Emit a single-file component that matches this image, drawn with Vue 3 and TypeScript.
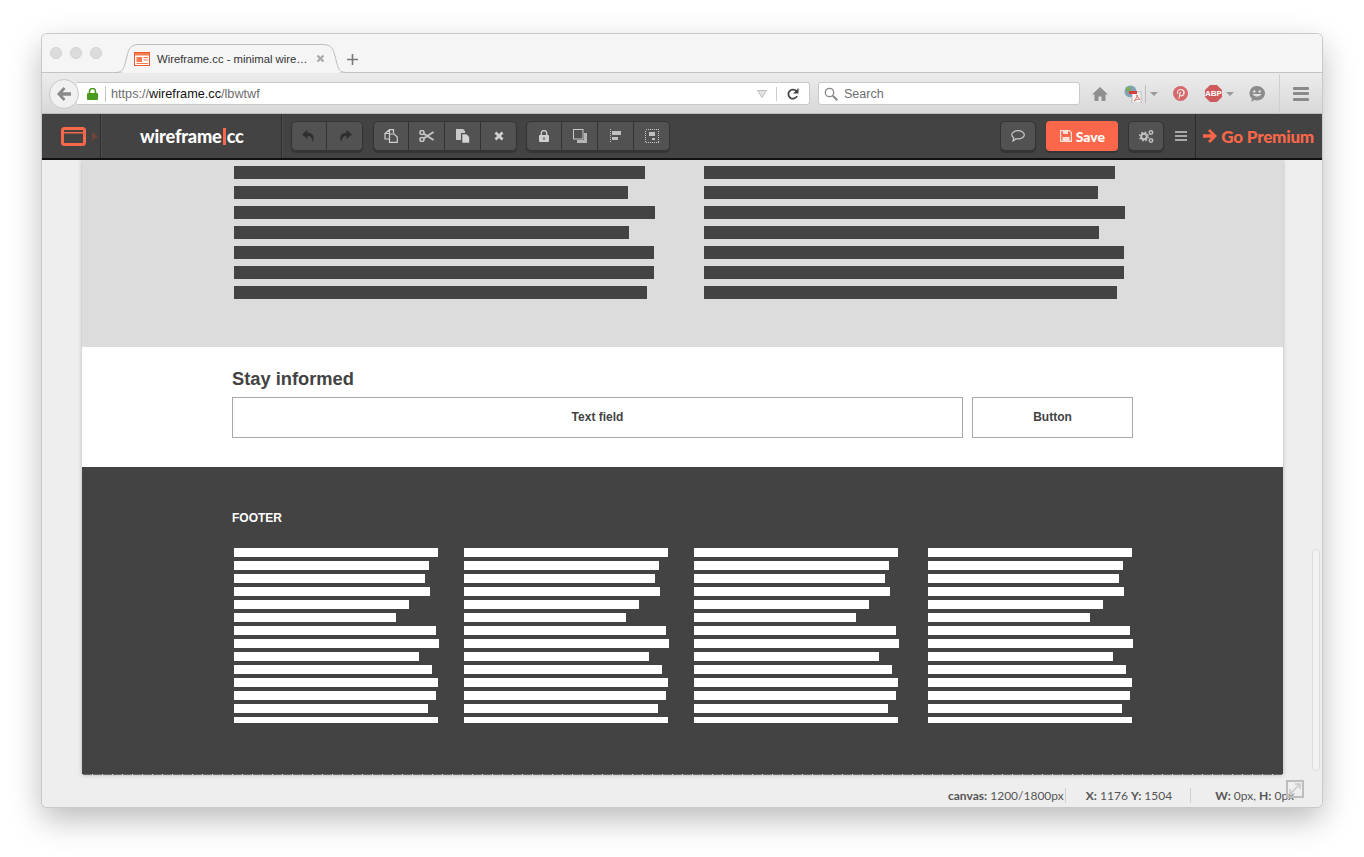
<template>
  <div class="page">
    <div class="window">
      <div class="tabstrip">
        <div class="lights"><i></i><i></i><i></i></div>
        <div class="tab">
          <svg class="tab-shape" width="232" height="29" viewBox="0 0 232 29">
            <path d="M0 28.5c6 0 8-2 9.500-7l3.500-13C14.500 3 18 .5 24 .5h184c6 0 9.500 2.500 11 8l3.500 13c1.500 5 3.500 7 9.500 7" fill="#f5f5f5" stroke="#bdbdbd" />
            <rect x="8" y="26" width="216" height="3" fill="#f5f5f5" />
          </svg>
          <svg class="favicon" width="16" height="14" viewBox="0 0 16 14">
            <rect x=".5" y=".5" width="15" height="13" fill="#fff" stroke="#f05a28" />
            <path d="M1 1h14v2.500H1zM2.500 5H8v5H2.500zM9.500 5H14v1H9.500zM9.500 7.500H14v1H9.500zM2.500 11H14v1H2.500z" fill="#f47b50" />
          </svg>
          <span class="tab-title">Wireframe.cc - minimal wire…</span>
          <svg class="tab-close" width="9" height="9" viewBox="0 0 9 9"><path d="M1.500 1.500l6 6M7.500 1.500l-6 6" stroke="#a8a8a8" stroke-width="2.200" /></svg>
        </div>
        <svg class="new-tab" width="11" height="11" viewBox="0 0 11 11"><path d="M5.500 0v11M0 5.500h11" stroke="#777" stroke-width="1.600" /></svg>
      </div>

      <div class="navbar">
        <div class="back">
          <svg width="16" height="14" viewBox="0 0 16 14"><path d="M7.500 0L1 7l6.500 7 2-2L6.500 8.800H15V5.200H6.500l3-3.200z" fill="#8a8a8a" /></svg>
        </div>
        <div class="urlbar">
          <svg class="lock" width="11" height="12" viewBox="0 0 11 12"><path d="M2.500 5V3.500a3 3 0 0 1 6 0V5" fill="none" stroke="#4a9a22" stroke-width="1.500" /><rect y="5" width="11" height="7" rx="1" fill="#4a9a22" /></svg>
          <span class="url-sep"></span>
          <span class="url">https://<b>wireframe.cc</b>/lbwtwf</span>
          <svg class="url-drop" width="10" height="8" viewBox="0 0 10 8"><path d="M.5.500h9L5 7.500z" fill="#e4e4e4" stroke="#bbb" /></svg>
          <span class="url-sep2"></span>
          <svg class="reload" width="12" height="12" viewBox="0 0 12 12"><path d="M10 8a4.500 4.500 0 1 1-.6-4.700" fill="none" stroke="#444" stroke-width="1.800" /><path d="M11.500 0v5.500H6z" fill="#444" /></svg>
        </div>
        <div class="searchbar">
          <svg width="14" height="14" viewBox="0 0 14 14"><circle cx="5.500" cy="5.500" r="4.200" fill="none" stroke="#888" stroke-width="1.300" /><path d="M8.800 8.800l4.500 4.500" stroke="#888" stroke-width="2" /></svg>
          <span>Search</span>
        </div>
        <svg class="home" width="16" height="14" viewBox="0 0 16 14"><path d="M8 0L0 7.500h2.500V14h4V9.500h3V14h4V7.500H16z" fill="#8f8f8f" /></svg>
        <svg class="pdf" width="18" height="18" viewBox="0 0 18 18">
          <circle cx="6.500" cy="6.500" r="6" fill="#7fa3b8" /><path d="M2 3c2-2 4-1 5 0s-1 3-2 4-3 0-3-4zM8 8c2-1 4 0 3 2s-3 2-3-2z" fill="#7fae5a" />
          <rect x="8" y="7" width="9" height="11" fill="#f4f4f4" stroke="#aaa" stroke-width=".7" /><rect x="5" y="6" width="8" height="3" fill="#d6403a" /><path d="M10 16c2-2 3-4 3-6 1 3 2 4 3 4-2 0-4 1-6 2z" fill="none" stroke="#d6403a" stroke-width=".7" />
        </svg>
        <span class="nav-sep pdf-sep"></span>
        <svg class="caret c1" width="8" height="4" viewBox="0 0 8 4"><path d="M0 0h8L4 4z" fill="#9a9a9a" /></svg>
        <svg class="pin" width="15" height="15" viewBox="0 0 15 15"><circle cx="7.500" cy="7.500" r="7.500" fill="#d5696c" /><path d="M7.700 3C5.500 3 4 4.400 4 6.200c0 1 .5 1.900 1.200 2.200.3-.6 0-.8-.1-1.300-.4-1.700.9-3 2.500-3 1.700 0 2.500 1 2.500 2.300 0 1.600-.8 2.900-1.800 2.900-.6 0-1-.5-.9-1 .2-.7.5-1.400.5-1.900 0-1.200-1.600-1-1.600.6 0 .5.100.8.100.8L5.700 11c-.1.800-.1 1.600 0 2.500.5-.7.900-1.500 1.100-2.300l.4-1.500c.3.400.8.700 1.400.7 1.900 0 3.200-1.700 3.200-3.900C11.800 4.500 10 3 7.700 3z" fill="#f3e6e6" /></svg>
        <span class="abp">ABP</span>
        <svg class="caret c2" width="8" height="4" viewBox="0 0 8 4"><path d="M0 0h8L4 4z" fill="#9a9a9a" /></svg>
        <svg class="smile" width="16" height="16" viewBox="0 0 16 16"><path d="M8 0a8 7.300 0 0 1 0 14.600c-1 0-2-.2-2.800-.5L2.500 16l.4-3.300A7.300 7.300 0 0 1 8 0z" fill="#8c8c8c" /><circle cx="5.300" cy="5.500" r="1.200" fill="#e2e2e2" /><circle cx="10.700" cy="5.500" r="1.200" fill="#e2e2e2" /><path d="M3.500 8c1.500 3.200 7.500 3.200 9 0z" fill="#e2e2e2" /></svg>
        <span class="nav-sep menu-sep"></span>
        <div class="browser-menu"><i></i><i></i><i></i></div>
      </div>

      <div class="toolbar">
        <svg class="app-logo" width="25" height="19" viewBox="0 0 25 19"><rect x="1.500" y="1.500" width="22" height="16" rx="2" fill="none" stroke="#f9674a" stroke-width="3" /><path d="M2 5h21v1.400H2z" fill="#f9674a" /></svg>
        <svg class="app-arrow" width="6" height="9" viewBox="0 0 6 9"><path d="M0 0l6 4.500L0 9z" fill="#6e4338" /></svg>
        <span class="tb-div d1"></span>
        <div class="brand">wireframe<em></em>cc</div>
        <span class="tb-div d2"></span>
        <div class="group g1">
          <button><svg width="16" height="14" viewBox="0 0 16 14"><path d="M6.500 1L1 5.500 6.500 10V7c3 0 4.500 1.500 5 6 2.500-4.500 1-9-5-9.200z" fill="#2e2e2e" /></svg></button>
          <button><svg width="16" height="14" viewBox="0 0 16 14"><path d="M9.500 1L15 5.500 9.500 10V7c-3 0-4.500 1.500-5 6C2 8.500 3.500 4 9.500 3.800z" fill="#2e2e2e" /></svg></button>
        </div>
        <div class="group g2">
          <button><svg width="14" height="14" viewBox="0 0 14 14"><path d="M9.500 4.500V.7H5.500L1 4.500v5.500h4.500M5.500.7v3.800H1" fill="none" stroke="#d0d0d0" stroke-width="1.200" /><path d="M5.500 5H10l3.300 3v5.300H5.500z" fill="none" stroke="#d0d0d0" stroke-width="1.200" /></svg></button>
          <button><svg width="15" height="12" viewBox="0 0 15 12"><circle cx="3" cy="2.500" r="2" fill="none" stroke="#c8c8c8" stroke-width="1.600" /><circle cx="3" cy="9.500" r="2" fill="none" stroke="#c8c8c8" stroke-width="1.600" /><path d="M4.500 3.500L14.500 10M4.500 8.500L14.500 2" stroke="#c8c8c8" stroke-width="1.800" /></svg></button>
          <button><svg width="14" height="14" viewBox="0 0 14 14"><path d="M0 0h7l2 2v2H5v7H0z" fill="#c8c8c8" /><path d="M6 5h4.500L13.500 8v6H6z" fill="#d4d4d4" stroke="#555" stroke-width=".6" /></svg></button>
          <button><svg width="10" height="10" viewBox="0 0 10 10"><path d="M1.500 1.500l7 7M8.500 1.500l-7 7" stroke="#d0d0d0" stroke-width="2.800" /></svg></button>
        </div>
        <div class="group g3">
          <button><svg width="10" height="12" viewBox="0 0 10 12"><path d="M2.300 5V3.300a2.700 2.700 0 0 1 5.400 0V5" fill="none" stroke="#cfcfcf" stroke-width="1.400" /><rect y="5" width="10" height="7" rx="1" fill="#cfcfcf" /><rect x="4.400" y="7" width="1.200" height="3" fill="#666" /></svg></button>
          <button><svg width="14" height="14" viewBox="0 0 14 14"><path d="M11 4h3v10H4v-3h7z" fill="#b4b4b4" /><rect x=".5" y=".5" width="9.500" height="9.500" fill="none" stroke="#c8c8c8" /></svg></button>
          <button><svg width="11" height="14" viewBox="0 0 11 14" shape-rendering="crispEdges"><path d="M.5 0v14" stroke="#c8c8c8" stroke-dasharray="1 1" /><path d="M2 2h9v4H2zM2 8h6v3H2z" fill="#c0c0c0" /></svg></button>
          <button><svg width="14" height="14" viewBox="0 0 14 14" shape-rendering="crispEdges"><rect x=".5" y=".5" width="13" height="13" fill="none" stroke="#c8c8c8" stroke-dasharray="1 1" /><path d="M4 3h6v4H4zM7 9h3v2H7z" fill="#c0c0c0" /></svg></button>
        </div>
        <div class="tb-right">
          <button class="single"><svg width="14" height="12" viewBox="0 0 14 12"><path d="M7 .7c3.500 0 6.300 1.800 6.300 4.100S10.500 8.900 7 8.900c-.7 0-1.300 0-1.900-.2L2 11l.7-3.200C1.400 7 .7 6 .7 4.800.7 2.500 3.500.7 7 .7z" fill="none" stroke="#c8c8c8" stroke-width="1.200" /></svg></button>
          <button class="save">
            <svg width="12" height="12" viewBox="0 0 12 12"><path d="M.6.600h8.800l2 2v8.800H.6z" fill="none" stroke="#fde0d8" stroke-width="1.200" /><path d="M3 1h5v3H3zM2.500 7h7v4h-7z" fill="#fde0d8" /></svg>
            Save
          </button>
          <button class="single gears"><svg width="15" height="13" viewBox="0 0 15 13"><circle cx="5" cy="6.500" r="2.800" fill="none" stroke="#c0c0c0" stroke-width="2" /><circle cx="5" cy="6.500" r="4.300" fill="none" stroke="#c0c0c0" stroke-width="1.400" stroke-dasharray="1.700 1.700" /><circle cx="12" cy="2.500" r="1.700" fill="none" stroke="#c0c0c0" stroke-width="1.500" /><circle cx="12" cy="10.500" r="1.700" fill="none" stroke="#c0c0c0" stroke-width="1.500" /></svg></button>
          <div class="tb-menu"><i></i><i></i><i></i></div>
          <span class="tb-div d3"></span>
          <svg class="prem-arrow" width="14" height="14" viewBox="0 0 14 14"><path d="M7 0l7 7-7 7-2-2 3.300-3.200H0V5.200h8.300L5 2z" fill="#f9674a" /></svg>
          <span class="premium">Go Premium</span>
        </div>
      </div>

      <div class="content">
        <div class="canvas">
          <section class="gray-sec">
            <div v-for="side in 2" :key="side" class="para">
              <div v-for="(w, i) in textBars" :key="i" class="text-bar" :style="{ width: w + 'px' }"></div>
            </div>
          </section>
          <section class="form-sec">
            <h3>Stay informed</h3>
            <div class="form-row">
              <div class="field">Text field</div>
              <div class="field btn">Button</div>
            </div>
          </section>
          <section class="footer-sec">
            <div class="footer-title">FOOTER</div>
            <div class="footer-cols">
              <div v-for="(col, c) in footerCols" :key="c" class="footer-col">
                <div v-for="(w, i) in col" :key="i" class="foot-bar" :style="{ width: w + 'px' }"></div>
              </div>
            </div>
          </section>
        </div>
        <div class="scrollbar"></div>
        <div class="status">
          <span class="s-canvas"><b>canvas:</b> 1200/1800px</span>
          <span class="s-sep"></span>
          <span class="s-xy"><b>X:</b> 1176 <b>Y:</b> 1504</span>
          <span class="s-sep s2"></span>
          <span class="s-wh"><b>W:</b> 0px, <b>H:</b> 0px</span>
        </div>
        <svg class="resize" width="18" height="18" viewBox="0 0 18 18"><rect x="1" y="1" width="16" height="16" fill="none" stroke="#bdbdbd" stroke-width="2" /><path d="M4 14L14 4M9 4h5v5M4 9v5h5" fill="none" stroke="#c9c9c9" stroke-width="1.500" /></svg>
      </div>
    </div>
  </div>
</template>

<script setup lang="ts">
const textBars: number[] = [411, 394, 421, 395, 420, 420, 413];

const col1: number[] = [204, 195, 191, 196, 175, 162, 202, 205, 185, 198, 204, 202, 194, 204];

const footerCols: number[][] = [col1, col1, col1, col1];
</script>

<style>
html,
body {
  margin: 0;
  background: #fff;
}
</style>

<style scoped>
.page {
  width: 1364px;
  height: 857px;
  padding: 34px 42px 0;
  box-sizing: border-box;
  overflow: hidden;
  font-family: "Liberation Sans", Arial, sans-serif;
}

.window {
  width: 1280px;
  height: 773px;
  border-radius: 5px;
  overflow: hidden;
  display: flex;
  flex-direction: column;
  box-shadow: 0 0 0 1px #c9c9c9, 0 12px 32px rgba(0, 0, 0, 0.28);
}

.tabstrip {
  height: 38px;
  flex: none;
  background: #f5f5f5;
  border-bottom: 1px solid #c4c4c4;
  display: flex;
  align-items: flex-start;
  box-sizing: content-box;
}

.lights {
  display: flex;
  gap: 8px;
  margin: 13px 0 0 8px;
}

.lights i {
  width: 12px;
  height: 12px;
  border-radius: 50%;
  background: #dcdcdc;
  border: 0.5px solid #d2d2d2;
  box-sizing: border-box;
}

.tab {
  position: relative;
  width: 232px;
  height: 29px;
  margin: 10px 0 0 13px;
  display: flex;
  align-items: center;
}

.tab-shape {
  position: absolute;
  left: 0;
  top: 0;
}

.favicon {
  position: relative;
  margin-left: 19px;
}

.tab-title {
  position: relative;
  margin-left: 7px;
  font-size: 11.3px;
  color: #333;
  white-space: nowrap;
  width: 159px;
}

.tab-close {
  position: relative;
}

.new-tab {
  margin: 20px 0 0 0;
}

.navbar {
  height: 40px;
  flex: none;
  background: linear-gradient(#ececec, #d8d8d8);
  display: flex;
  align-items: center;
  position: relative;
  box-sizing: border-box;
  padding-top: 1px;
}

.back {
  width: 30px;
  height: 30px;
  border-radius: 50%;
  background: #f1f1f1;
  border: 1px solid #c8c8c8;
  box-sizing: border-box;
  margin-left: 7px;
  position: relative;
  z-index: 1;
  display: flex;
  align-items: center;
  justify-content: center;
}

.urlbar {
  width: 733px;
  height: 23px;
  margin-left: -2px;
  background: #fff;
  border: 1px solid #c8c8c8;
  border-left: none;
  border-radius: 0 3px 3px 0;
  box-sizing: border-box;
  display: flex;
  align-items: center;
}

.lock {
  margin-left: 10px;
}

.url-sep {
  width: 1px;
  height: 16px;
  background: #c4c4c4;
  margin-left: 7px;
}

.url {
  margin-left: 5px;
  font-size: 12.7px;
  color: #6d6d6d;
  flex: 1;
}

.url b {
  font-weight: 400;
  color: #111;
}

.url-drop {
  margin-right: 9px;
}

.url-sep2 {
  width: 1px;
  height: 14px;
  background: #ccc;
}

.reload {
  margin: 0 10px 0 10px;
}

.searchbar {
  width: 262px;
  height: 23px;
  margin-left: 8px;
  background: #fff;
  border: 1px solid #c8c8c8;
  border-radius: 3px;
  box-sizing: border-box;
  display: flex;
  align-items: center;
  padding-left: 5px;
  gap: 6px;
  font-size: 12.5px;
  color: #6e6e6e;
}

.home {
  margin-left: 12px;
}

.pdf {
  margin-left: 16px;
}

.nav-sep {
  width: 1px;
  background: #bdbdbd;
}

.pdf-sep {
  height: 18px;
  margin-left: 3px;
}

.c1 {
  margin-left: 4px;
}

.pin {
  margin-left: 15px;
}

.abp {
  margin-left: 17px;
  width: 17px;
  height: 17px;
  background: #cf5a5e;
  clip-path: polygon(30% 0, 70% 0, 100% 30%, 100% 70%, 70% 100%, 30% 100%, 0 70%, 0 30%);
  color: #fff;
  font-size: 8px;
  font-weight: 700;
  line-height: 17px;
  text-align: center;
}

.c2 {
  margin-left: 4px;
}

.smile {
  margin-left: 15px;
}

.menu-sep {
  height: 40px;
  margin-left: 14px;
  background: #cfcfcf;
}

.browser-menu {
  margin-left: 13px;
  display: flex;
  flex-direction: column;
  gap: 2.5px;
}

.browser-menu i {
  display: block;
  width: 16px;
  height: 3px;
  border-radius: 1px;
  background: #8a8a8a;
}

.toolbar {
  height: 44px;
  flex: none;
  background: #434343;
  border-top: 1px solid #bcbcbc;
  border-bottom: 2px solid #111;
  display: flex;
  align-items: center;
  box-sizing: content-box;
}

.app-logo {
  margin-left: 19px;
}

.app-arrow {
  margin-left: 6px;
}

.tb-div {
  width: 1px;
  height: 44px;
  background: #2e2e2e;
  border-right: 1px solid #4e4e4e;
  box-sizing: content-box;
}

.d1 {
  margin-left: 2px;
}

.brand {
  margin-left: 38px;
  width: 141px;
  font-family: Lato, sans-serif;
  font-weight: 900;
  font-size: 18.2px;
  color: #fff;
  display: flex;
  align-items: center;
  letter-spacing: -0.2px;
}

.brand em {
  width: 3px;
  height: 17px;
  background: #f9674a;
  margin: 0 1px;
}

.group {
  display: flex;
  height: 30px;
  border-radius: 5px;
  overflow: hidden;
  box-shadow: 0 2px 1px #353535;
}

.g1 {
  margin-left: 8px;
}

.g2 {
  margin-left: 10px;
}

.g3 {
  margin-left: 9px;
}

.group button,
.single {
  width: 36px;
  height: 30px;
  padding: 0;
  border: 1px solid #333;
  border-left: none;
  background: #525252;
  display: flex;
  align-items: center;
  justify-content: center;
  box-sizing: border-box;
}

.group button:first-child {
  border-left: 1px solid #333;
  border-radius: 5px 0 0 5px;
}

.group button:last-child {
  border-radius: 0 5px 5px 0;
}

.tb-right {
  margin-left: auto;
  display: flex;
  align-items: center;
  height: 44px;
}

.single {
  width: 36px;
  border: 1px solid #333;
  border-radius: 5px;
  box-shadow: 0 2px 1px #353535;
}

.save {
  width: 72px;
  height: 30px;
  margin: 0 0 0 10px;
  padding: 0;
  border: none;
  border-radius: 4px;
  background: #fb674b;
  box-shadow: 0 2px 1px #353535;
  color: #fff;
  font-family: Lato, sans-serif;
  font-weight: 900;
  font-size: 14px;
  display: flex;
  align-items: center;
  justify-content: center;
  gap: 4px;
}

.gears {
  margin-left: 10px;
}

.tb-menu {
  margin-left: 11px;
  display: flex;
  flex-direction: column;
  gap: 2px;
}

.tb-menu i {
  display: block;
  width: 12px;
  height: 2px;
  background: #a8a8a8;
}

.d3 {
  margin-left: 8px;
  background: #2a2a2a;
  border-right-color: #454545;
}

.prem-arrow {
  margin-left: 6px;
}

.premium {
  margin: 0 8px 0 4px;
  font-family: Lato, sans-serif;
  font-weight: 900;
  font-size: 17px;
  letter-spacing: -0.2px;
  color: #f9674a;
  white-space: nowrap;
}

.content {
  flex: 1;
  background: #eee;
  position: relative;
  overflow: hidden;
}

.canvas {
  width: 1201px;
  margin-left: 40px;
  height: 615px;
  box-shadow: 0 0 4px rgba(0, 0, 0, 0.25);
  display: flex;
  flex-direction: column;
}

.gray-sec {
  height: 187px;
  flex: none;
  background: #dcdcdc;
  box-sizing: border-box;
  padding: 6px 0 0 152px;
  display: flex;
  gap: 49px;
}

.para {
  width: 421px;
  display: flex;
  flex-direction: column;
  gap: 7px;
}

.text-bar {
  height: 13px;
  background: #434343;
}

.form-sec {
  height: 120px;
  flex: none;
  background: #fff;
  box-sizing: border-box;
  padding: 21px 0 0 150px;
}

.form-sec h3 {
  margin: 0 0 8px;
  font-size: 18.3px;
  line-height: 21px;
  font-weight: 700;
  color: #434343;
}

.form-row {
  display: flex;
  gap: 9px;
}

.field {
  width: 731px;
  height: 41px;
  box-sizing: border-box;
  border: 1px solid #a8a8a8;
  background: #fff;
  font-size: 12px;
  font-weight: 700;
  color: #434343;
  display: flex;
  align-items: center;
  justify-content: center;
  padding-bottom: 2px;
}

.btn {
  width: 161px;
}

.footer-sec {
  flex: 1;
  background: repeating-linear-gradient(90deg, #e0e0e0 0 1px, #6a6a6a 1px 10px) bottom / 100% 1px no-repeat, #434343;
  box-sizing: border-box;
  padding: 44px 0 0 150px;
  overflow: hidden;
}

.footer-title {
  font-size: 12px;
  line-height: 14px;
  font-weight: 700;
  color: #fff;
}

.footer-cols {
  display: flex;
  margin: 23px 0 0 2px;
}

.footer-col {
  width: 230px;
  display: flex;
  flex-direction: column;
  gap: 4px;
}

.footer-col:nth-child(3) {
  width: 234px;
}

.foot-bar {
  height: 9px;
  background: #fff;
}

.foot-bar:last-child {
  height: 6px;
}

.scrollbar {
  position: absolute;
  right: 2px;
  top: 389px;
  width: 8px;
  height: 222px;
  border: 1px solid #dcdcdc;
  border-radius: 5px;
  background: #f2f2f2;
  box-sizing: border-box;
}

.status {
  position: absolute;
  left: 906px;
  bottom: 4px;
  height: 16px;
  display: flex;
  align-items: center;
  font-family: Lato, sans-serif;
  font-size: 12px;
  color: #555;
  white-space: nowrap;
}

.status b {
  font-weight: 700;
}

.s-sep {
  width: 1px;
  height: 15px;
  background: #d0d0d0;
  margin: 0 20px 0 1px;
}

.s2 {
  margin: 0 24px 0 18px;
}

.resize {
  position: absolute;
  right: 18px;
  bottom: 9px;
}
</style>
